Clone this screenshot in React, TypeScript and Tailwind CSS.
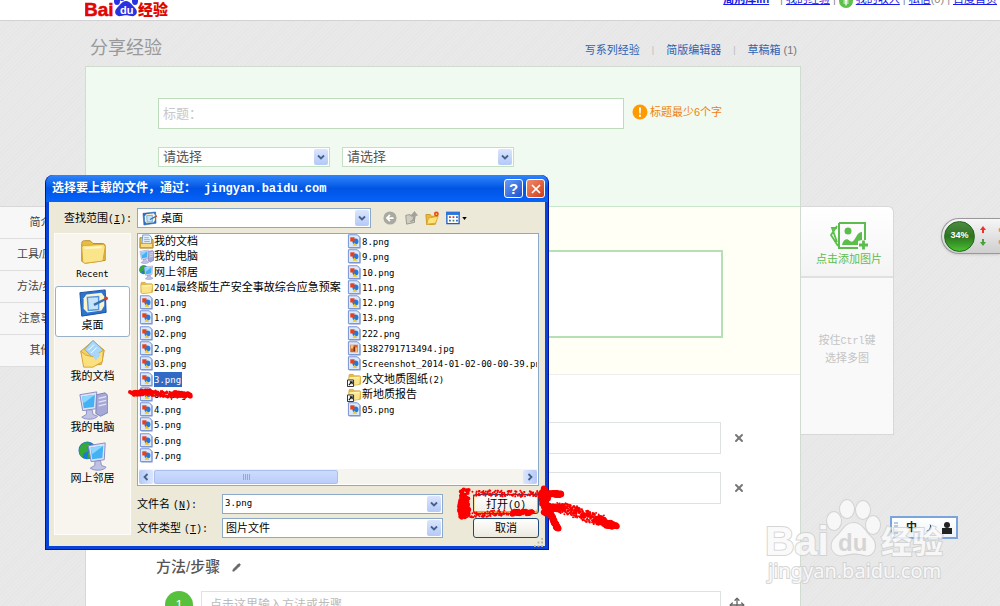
import React, { useState } from 'react';
import clsx from 'clsx';
import { Move, Pencil, X } from 'lucide-react';

type IconKind = 'docs' | 'computer' | 'network' | 'folder' | 'png' | 'jpg' | 'shortcut' | 'desktop';

const FILES: { name: string; kind: IconKind }[] = [
  { name: '我的文档', kind: 'docs' },
  { name: '我的电脑', kind: 'computer' },
  { name: '网上邻居', kind: 'network' },
  { name: '2014最终版生产安全事故综合应急预案', kind: 'folder' },
  { name: '01.png', kind: 'png' },
  { name: '1.png', kind: 'png' },
  { name: '02.png', kind: 'png' },
  { name: '2.png', kind: 'png' },
  { name: '03.png', kind: 'png' },
  { name: '3.png', kind: 'png' },
  { name: '04.png', kind: 'png' },
  { name: '4.png', kind: 'png' },
  { name: '5.png', kind: 'png' },
  { name: '6.png', kind: 'png' },
  { name: '7.png', kind: 'png' },
  { name: '8.png', kind: 'png' },
  { name: '9.png', kind: 'png' },
  { name: '10.png', kind: 'png' },
  { name: '11.png', kind: 'png' },
  { name: '12.png', kind: 'png' },
  { name: '13.png', kind: 'png' },
  { name: '222.png', kind: 'png' },
  { name: '1382791713494.jpg', kind: 'jpg' },
  { name: 'Screenshot_2014-01-02-00-00-39.png', kind: 'png' },
  { name: '水文地质图纸(2)', kind: 'shortcut' },
  { name: '新地质报告', kind: 'shortcut' },
  { name: '05.png', kind: 'png' },
];

const PLACES: { name: string; kind: IconKind }[] = [
  { name: 'Recent', kind: 'folder' },
  { name: '桌面', kind: 'desktop' },
  { name: '我的文档', kind: 'docs' },
  { name: '我的电脑', kind: 'computer' },
  { name: '网上邻居', kind: 'network' },
];

function ShellIcon({ kind, large = false }: { kind: IconKind; large?: boolean }) {
  const size = large ? 'w-[30px] h-[30px] shrink-0' : 'w-[15px] h-[15px] shrink-0';

  if (kind === 'png' || kind === 'jpg') {
    return (
      <svg viewBox="0 0 16 16" className={size}>
        <path d="M2.5 1h9l3 3v11.5h-12z" fill="#8d9cc8" />
        <path d="M1.5 .8h9.5l2.7 2.7v11H1.5z" fill="#dce8fb" stroke="#6f8fd0" />
        {kind === 'png' ? (
          <>
            <circle cx="9" cy="8" r="3.2" fill="#1c7be0" />
            <path d="M3.5 3.500h4.500v4.500h-4.500z" fill="#e8401c" />
            <path d="M6 12.5 8 9l3 3.5z" fill="#f3c51d" />
          </>
        ) : (
          <>
            <path d="M3.5 4h8v8h-8z" fill="#d9642a" />
            <path d="M4 4h3v4H4zM9 7h2v5H9z" fill="#f5c078" />
            <path d="M7 6h1.5v5H7z" fill="#7c2d12" />
          </>
        )}
      </svg>
    );
  }

  if (kind === 'docs' && large) {
    return (
      <svg viewBox="0 0 32 32" className={size}>
        <path d="M3 13 16 2l12 10-3 15-18 2z" fill="#f4cf62" stroke="#d09a28" />
        <path d="m7 11 9-9.5L27 12l-9 10z" fill="#a9d7fa" stroke="#6fa9df" />
        <path d="M11 12l6-6M14 15l6-6" stroke="#fff" />
        <path d="m3 13 5 4 8 2 11-7-1 12-10 6H6z" fill="#fbe07f" stroke="#d6a331" />
        <path d="m16 19 5-5 3 3-5 6z" fill="#a9d7fa" />
      </svg>
    );
  }

  if (kind === 'docs') {
    return (
      <svg viewBox="0 0 16 16" className={size}>
        <path d="M1 4h5l9 2v9H1z" fill="#f1cc60" stroke="#a87e1c" />
        <path d="M4 1h7l2.500 3v8H3z" fill="#e6f1fd" stroke="#6f96c8" />
        <path d="M5.500 4h5M5.500 6h6M5.500 8h6" stroke="#7fb0e6" />
        <path d="M1.500 10h13v4.500h-13z" fill="#f8dc83" stroke="#c7982b" />
      </svg>
    );
  }

  if (kind === 'folder' || kind === 'shortcut') {
    return (
      <svg viewBox="0 0 32 32" className={size}>
        <path d="M4 8c0-2 1-3 3-3h6l3 3h10c2 0 3 1 3 3v15L8 29l-4-2z" fill="#e9bd45" stroke="#b98b20" />
        <path d="M4 12c1-2 2-2 4-2l17-1c3 0 4 1 4 3l-2 12c0 2-1 3-3 3L8 29c-2 0-3-1-3-3z" fill="#fbe58b" stroke="#d3a431" />
        <path d="M7 13l18-1" stroke="#fff6c9" strokeWidth="2" />
        {kind === 'shortcut' && (
          <>
            <path d="M1 17h13v14H1z" fill="#fff" stroke="#222" strokeWidth="2" />
            <path d="M4 28l6-7M6 21h5v5" fill="none" stroke="#111" strokeWidth="2.500" />
          </>
        )}
      </svg>
    );
  }

  if (kind === 'desktop') {
    return (
      <svg viewBox="0 0 32 32" className={size}>
        <path d="m2 5 27-3 1 24-26 4z" fill="#2b74cf" stroke="#174f9f" />
        <path d="M9 7l16-2 3 4v10l-3 5-15 2-4-4V11z" fill="#fdf3cf" />
        <path d="M10 10l12-1v14l-11 1z" fill="#c5e4fb" stroke="#4f96de" strokeWidth="1.500" />
        <path d="m17 18 12-6" stroke="#3b6ea8" strokeWidth="2.500" />
        <circle cx="30" cy="11" r="2" fill="#e23a1d" />
      </svg>
    );
  }

  return (
    <svg viewBox="0 0 32 32" className={size}>
      {kind === 'network' ? (
        <>
          <circle cx="10" cy="10" r="9.500" fill="#1f78d8" />
          <path d="M3 5c3-4 7-4 10-3l-3 5 1 4-5 2-1 5C1 15 0 10 3 5z" fill="#36a93a" />
          <path d="M11 12l5 1-2 5-4 1z" fill="#36a93a" />
        </>
      ) : (
        <path d="m20 5 9-2 3 3v18l-8 4-5-3z" fill="#a6a9d6" stroke="#7a7db4" />
      )}
      {kind === 'computer' && <path d="M22 9l8-2M22 13l8-2M22 17l8-2" stroke="#e2e3f7" strokeWidth="1.500" />}
      <g transform={kind === 'network' ? 'translate(9 1)' : 'translate(0 1)'}>
        <path d="M9 20h6l1 5 5 2c-3 4-13 4-17 1l5-3z" fill="#bfc2e4" stroke="#8b8fc2" />
        <path d="M2 4 20 1l-1 18-14 2z" fill="#dfe2f5" stroke="#8389c2" />
        <path d="M4.500 6 18 4l-1 13-11 1.500z" fill="#45b1f5" />
        <path d="M4.500 6 18 4l-12 9z" fill="#8bd6ff" />
      </g>
    </svg>
  );
}

function Chevron({ className }: { className?: string }) {
  return (
    <span className={clsx('flex items-center justify-center shrink-0 rounded-xs bg-gradient-to-b from-[#dbe5fd] to-[#b4c9f8]', className)}>
      <svg viewBox="0 0 8 8" className="w-2 h-2">
        <path d="m1 2.500 3 3 3-3" fill="none" stroke="#44618c" strokeWidth="1.800" />
      </svg>
    </span>
  );
}

function CategorySelect({ label }: { label: string }) {
  return (
    <div className="flex items-center w-[172px] h-5 bg-white border border-[#c5dfc5] pr-px">
      <select aria-label={label} className="flex-1 min-w-0 appearance-none bg-transparent pl-1 text-[13px] leading-4 text-[#555] outline-none">
        <option>请选择</option>
      </select>
      <Chevron className="w-[14px] h-4" />
    </div>
  );
}

function SiteHeader() {
  return (
    <header className="flex justify-between h-[21px] pl-[85px] bg-white border-b border-[#d2d2d2] overflow-hidden">
      <a href="#home" aria-label="Baidu 经验" className="block h-5 overflow-hidden">
        <svg viewBox="0 0 84 20" className="w-[84px] h-5">
          <text x="-1" y="16" fontFamily="Liberation Sans, sans-serif" fontWeight="700" fontSize="19" fill="#e10601" stroke="#e10601" strokeWidth="0.500">Bai</text>
          <g fill="#2932e1">
            <ellipse cx="32" cy="1" rx="3" ry="4" />
            <ellipse cx="37" cy="-3" rx="3" ry="4" />
            <ellipse cx="50" cy="1" rx="3" ry="4" />
            <path d="M41 1c4 0 6 4 9 7 4 4 1 9-4 8-4-1-6-1-10 0-5 1-8-4-4-8 3-3 5-7 9-7z" />
          </g>
          <text x="35" y="14" fontFamily="Liberation Sans, sans-serif" fontWeight="700" fontSize="11" fill="#fff">du</text>
          <text x="53" y="15" fontFamily="Noto Sans CJK SC, sans-serif" fontWeight="900" fontSize="15" fill="#e10601">经验</text>
        </svg>
      </a>
      <div className="flex items-center gap-[3px] h-4 -mt-[9px] pr-[3px] text-[11px] leading-4 text-[#888] whitespace-nowrap">
        <a href="#user" className="mr-2 font-bold text-[#1a1ae6] underline">周荆库lin</a>
        <span>|</span>
        <a href="#mine" className="text-[#1a1ae6] underline">我的经验</a>
        <span>|</span>
        <svg viewBox="0 0 14 14" className="w-[14px] h-[14px] mt-1">
          <circle cx="7" cy="7" r="7" fill="#5fbf4b" />
          <path d="M4.500 3.500 7 6.500l2.500-3M4.500 7h5M4.500 9h5M7 6.500V11.500" fill="none" stroke="#fff" strokeWidth="1.200" />
        </svg>
        <a href="#income" className="text-[#1a1ae6] underline">我的收入</a>
        <span>|</span>
        <span><a href="#mail" className="text-[#1a1ae6] underline">私信</a>(0)</span>
        <span>|</span>
        <a href="#baidu" className="text-[#1a1ae6] underline">百度首页</a>
      </div>
    </header>
  );
}

function SectionNav() {
  return (
    <nav className="w-[85px] shrink-0 mt-[185px]">
      <ul className="border-t border-[#d8d8d8] bg-[#f7f7f7]">
        {['简介', '工具/原料', '方法/步骤', '注意事项', '其他'].map((item) => (
          <li key={item} className="border-b border-[#dedede]">
            <a href={`#${item}`} className="block h-[31px] pr-1 leading-[31px] text-center text-[11px] text-[#444]">{item}</a>
          </li>
        ))}
      </ul>
    </nav>
  );
}

function ToolRow({ label }: { label: string }) {
  return (
    <div className="flex items-center gap-3">
      <input aria-label={label} className="w-[563px] h-8 bg-white border border-[#dfe3df] outline-none" />
      <button aria-label="删除"><X size={12} className="text-[#777] stroke-[4]" /></button>
    </div>
  );
}

function Editor() {
  return (
    <main className="flex-1 min-w-0 max-w-[716px]">
      <div className="flex items-center justify-between h-[45px] pl-[5px] pr-1 pt-2">
        <h1 className="text-[18px] leading-6 text-[#999]">分享经验</h1>
        <div className="flex items-center gap-3 pt-1 text-[11px] leading-4 text-[#2a62b4]">
          <a href="#series">写系列经验</a>
          <span className="text-[#bbb] text-[9px]">|</span>
          <a href="#simple">简版编辑器</a>
          <span className="text-[#bbb] text-[9px]">|</span>
          <span><a href="#drafts">草稿箱</a> <span className="text-[#777]">(1)</span></span>
        </div>
      </div>

      <div className="border border-[#cfdccf] border-b-0 bg-white">
        <section className="h-[140px] pl-[72px] pt-[31px] bg-[#f0faf0] border-b border-[#c8e6c8]">
          <div className="flex items-center gap-2">
            <input aria-label="标题" placeholder="标题：" className="w-[466px] h-[31px] pl-1 bg-white border border-[#bcdcbc] text-[13px] placeholder:text-[#c8c8c8] outline-none" />
            <p className="flex items-center gap-0.5 text-[11px] leading-4 pb-1 text-[#f07f13]">
              <svg viewBox="0 0 16 16" className="w-4 h-4">
                <circle cx="8" cy="8" r="7.500" fill="#ff9b00" />
                <path d="M7 3.500h2L8.700 9.500H7.300zM7 10.800h2v1.900H7z" fill="#fff" />
              </svg>
              标题最少6个字
            </p>
          </div>
          <div className="flex gap-3 pt-[18px]">
            <CategorySelect label="一级分类" />
            <CategorySelect label="二级分类" />
          </div>
        </section>

        <section className="h-[168px] pl-[72px] pt-[43px] bg-[#fffff5] border-b border-[#eee]">
          <textarea aria-label="简介" className="block w-[565px] h-[88px] resize-none bg-white border-2 border-[#b4e0b4] outline-none" />
        </section>

        <section className="pl-[72px] pt-[47px]">
          <div className="flex flex-col gap-[18px]">
            <ToolRow label="工具一" />
            <ToolRow label="工具二" />
          </div>
          <h2 className="flex items-center gap-3 pt-[51px] -ml-0.5 text-[15px] leading-6 font-medium text-[#555]">
            方法/步骤
            <Pencil size={9} className="fill-[#666] text-[#666]" />
          </h2>
          <div className="flex items-center gap-2 pt-3 pl-[7px]">
            <span className="w-7 h-7 shrink-0 rounded-full bg-[#57c13e] text-center text-[13px] leading-7 text-white">1</span>
            <input aria-label="步骤 1" placeholder="点击这里输入方法或步骤" className="w-[520px] h-[28px] pl-2 bg-white border border-[#dfe3df] text-[12px] placeholder:text-[#bbb] outline-none" />
            <button aria-label="移动"><Move size={16} className="text-[#666]" /></button>
          </div>
        </section>
      </div>
    </main>
  );
}

function PicturePanel() {
  return (
    <aside className="w-[93px] shrink-0 mt-[185px]">
      <div className="rounded-tr-md border border-l-0 border-[#d8d8d8] bg-[#f9f9f9] text-center text-[11px]">
        <button className="flex flex-col items-center w-full h-[71px] pt-[14px] pl-1 border-b-2 border-[#e0e0e0] bg-gradient-to-b from-white to-[#f4f4f4] rounded-tr-md leading-4 text-[#5cbd4d]">
          <svg viewBox="0 0 40 30" className="w-10 h-[30px]">
            <path d="m8 5-6 9 7 11M8 7l-5 0 5 14" fill="none" stroke="#5cbd4d" strokeWidth="1.800" />
            <path d="M10 2h26v17M29 27H10V2" fill="none" stroke="#5cbd4d" strokeWidth="2" />
            <circle cx="19" cy="10" r="3.500" fill="#5cbd4d" />
            <path d="M13 24c1-5 4-8 8-4 3 2 4-1 6-4 2-4 4-5 6-5v8l-4 1v4z" fill="#5cbd4d" />
            <path d="M34.500 19.500v9M30 24h9" stroke="#5cbd4d" strokeWidth="2.800" />
          </svg>
          点击添加图片
        </button>
        <p className="h-[156px] pt-[54px] leading-4 text-[#c4c4c4]">
          按住<span className="font-['Liberation_Mono',monospace] text-[10px]">Ctrl</span>键<br />选择多图
        </p>
      </div>
    </aside>
  );
}

// latin runs use the narrow fixed-width face, the rest the CJK one
function FileName({ name }: { name: string }) {
  return (
    <>
      {name.split(/([\x20-\x7e]+)/).map((part, i) =>
        i % 2 ? (
          <span key={i} className="font-['DejaVu_Sans_Mono',monospace] text-[9px]">{part}</span>
        ) : (
          part
        )
      )}
    </>
  );
}

function FileRow({ name, kind, selected, onSelect }: { name: string; kind: IconKind; selected: boolean; onSelect: () => void }) {
  return (
    <li className="flex items-center min-w-0 overflow-hidden">
      <button onClick={onSelect} className="flex items-center h-[15px] whitespace-nowrap">
        <ShellIcon kind={kind} />
        <span className={clsx('h-[15px] pr-px leading-[15px] text-[11px]', selected && 'bg-[#316ac5] text-white')}>
          <FileName name={name} />
        </span>
      </button>
    </li>
  );
}

function FileDialog() {
  const [selected, setSelected] = useState('3.png');

  return (
    <div
      role="dialog"
      aria-label="选择要上载的文件"
      className="absolute left-[45px] top-[175px] w-[504px] pb-[3px] px-[3px] rounded-t-lg bg-[#0842d6] border border-t-0 border-[#0016a0] text-black"
    >
      <div className="flex items-center gap-[3px] h-[27px] -mx-[3px] pl-[6px] pr-[3px] rounded-t-lg bg-gradient-to-b from-[#2f86fb] via-[#0054e3] to-[#0563fb]">
        <h2 className="flex-1 text-[12px] font-bold text-white whitespace-nowrap">
          选择要上载的文件，通过：
          <span className="font-['Liberation_Mono',monospace] ml-2">jingyan.baidu.com</span>
        </h2>
        <button className="w-[19px] h-[19px] rounded-[3px] border border-white bg-gradient-to-br from-[#6c9bf5] to-[#1a4fd0] text-[15px] leading-4 font-bold text-white">?</button>
        <button aria-label="关闭" className="flex items-center justify-center w-[19px] h-[19px] rounded-[3px] border border-white bg-gradient-to-br from-[#f08b6a] to-[#cf3a10]">
          <X size={14} className="text-white stroke-[3]" />
        </button>
      </div>

      <div className="bg-[#ece9d8] px-[5px] pt-[6px] h-[344px]">
        <div className="flex items-center h-5 text-[11px]">
          <label htmlFor="look-in" className="w-[83px] pl-[10px]">查找范围<span className="font-['Liberation_Mono',monospace] text-[10px]">(<u>I</u>):</span></label>
          <div className="flex items-center w-[234px] h-5 px-px pl-1 border border-[#8ba9c9] bg-white">
            <ShellIcon kind="desktop" />
            <select id="look-in" className="flex-1 min-w-0 appearance-none pl-1 leading-4 outline-none">
              <option>桌面</option>
            </select>
            <Chevron className="w-[14px] h-4" />
          </div>
          <div className="flex items-center gap-[7px] pl-3">
            <button aria-label="后退">
              <svg viewBox="0 0 16 16" className="w-[14px] h-[14px]">
                <circle cx="8" cy="8" r="7.500" fill="#aaa9a0" />
                <path d="M12 8H5M8 4.500 4.500 8 8 11.500" fill="none" stroke="#fff" strokeWidth="2" />
              </svg>
            </button>
            <button aria-label="向上一级">
              <svg viewBox="0 0 16 16" className="w-[14px] h-[14px]">
                <path d="M2 5l5-1 1 2 4-1v8l-9 2z" fill="#cfcdc2" stroke="#96948a" />
                <path d="M7 12c3-1 4-3 3.500-7H8l4-4.500L15.500 5H13c0 5-2 7-6 7z" fill="#a5a399" stroke="#8f8d84" strokeWidth="0.500" />
              </svg>
            </button>
            <button aria-label="新建文件夹">
              <svg viewBox="0 0 16 16" className="w-[14px] h-[14px]">
                <path d="M1 4h5l1 2h6l-1 9-10 1z" fill="#e9b93c" stroke="#c89724" />
                <path d="m4 8 11-2-3 8-10 1z" fill="#fde27a" stroke="#d8a62f" />
                <circle cx="13" cy="3.500" r="2.800" fill="#e8491d" />
                <circle cx="13" cy="3.500" r="1" fill="#ffd34d" />
              </svg>
            </button>
            <button aria-label="查看" className="flex items-center gap-0.5">
              <svg viewBox="0 0 16 16" className="w-[14px] h-[14px]">
                <path d="M1 1.500h14v13H1z" fill="#fff" stroke="#1d5fc4" strokeWidth="1.500" />
                <path d="M0 1h16v3.500H0z" fill="#2b73dd" />
                <path d="M3.500 7h2M7.500 7h2" stroke="#c43b1e" strokeWidth="2" />
                <path d="M11.500 7h2M3.500 11h2M11.500 11h2" stroke="#2f64c4" strokeWidth="2" />
                <path d="M7.500 11h2" stroke="#2f9a3a" strokeWidth="2" />
              </svg>
              <svg viewBox="0 0 6 4" className="w-[5px] h-[3px]"><path d="M0 0h6L3 4z" /></svg>
            </button>
          </div>
        </div>

        <div className="flex gap-[6px] pt-[5px]">
          <ul className="w-[77px] h-[302px] shrink-0 border border-[#fdfcf8] bg-[#f7f5ee] pt-px text-center">
            {PLACES.map((place) => (
              <li key={place.name}>
                <button
                  className={clsx(
                    'flex flex-col items-center justify-end w-full h-[51px] pb-1 rounded-[3px] border text-[11px] leading-[14px]',
                    place.kind === 'desktop' ? 'border-[#98b1c9] bg-white' : 'border-transparent'
                  )}
                >
                  <ShellIcon kind={place.kind} large />
                  <span><FileName name={place.name} /></span>
                </button>
              </li>
            ))}
          </ul>

          <div className="flex-1 min-w-0 pr-px">
            <div className="h-[253px] border border-[#8ba9c9] bg-white px-px">
              <ul className="grid grid-flow-col grid-rows-15 grid-cols-[208px_minmax(0,1fr)] h-[229px]">
                {FILES.map((file) => (
                  <FileRow key={file.name} {...file} selected={selected === file.name} onSelect={() => setSelected(file.name)} />
                ))}
              </ul>
              <div className="flex items-center justify-between h-[15px] mt-[6px] bg-[#f5f4ef]">
                <div className="flex items-center gap-px">
                  <Chevron className="w-[14px] h-[14px] rotate-90" />
                  <span className="flex items-center justify-center gap-px w-[184px] h-[14px] rounded-xs border border-[#a9bff2] bg-gradient-to-b from-[#cddcfd] to-[#bacdfb]">
                    <span className="w-px h-1.5 bg-[#8ea8e6]" />
                    <span className="w-px h-1.5 bg-[#8ea8e6]" />
                    <span className="w-px h-1.5 bg-[#8ea8e6]" />
                    <span className="w-px h-1.5 bg-[#8ea8e6]" />
                  </span>
                </div>
                <Chevron className="w-[14px] h-[14px] -rotate-90" />
              </div>
            </div>

            <div className="grid grid-cols-[85px_221px_minmax(0,1fr)] gap-y-1 pt-2 text-[11px]">
              <label htmlFor="file-name" className="self-center">文件名 <span className="font-['Liberation_Mono',monospace] text-[10px]">(<u>N</u>):</span></label>
              <div className="flex items-center h-5 pr-px border border-[#8ba9c9] bg-white">
                <input id="file-name" value={selected} readOnly className="flex-1 min-w-0 pl-0.5 font-['DejaVu_Sans_Mono',monospace] text-[9px] outline-none" />
                <Chevron className="w-[14px] h-4" />
              </div>
              <button className="ml-[30px] h-5 rounded-[3px] border border-[#1c4a7e] bg-gradient-to-b from-white to-[#f0efe8] shadow-[inset_-1px_-2px_0_0_#f0a53a,inset_1px_1px_0_0_#fbdc9c]">
                打开<span className="font-['Liberation_Mono',monospace] text-[10px]">(<u>O</u>)</span>
              </button>
              <label htmlFor="file-type" className="self-center">文件类型 <span className="font-['Liberation_Mono',monospace] text-[10px]">(<u>T</u>):</span></label>
              <div className="flex items-center h-5 pr-px border border-[#8ba9c9] bg-white">
                <select id="file-type" className="flex-1 min-w-0 appearance-none pl-[3px] leading-4 outline-none">
                  <option>图片文件</option>
                </select>
                <Chevron className="w-[14px] h-4" />
              </div>
              <button className="ml-[30px] h-5 rounded-[3px] border border-[#1c4a7e] bg-gradient-to-b from-white to-[#ebe9df]">取消</button>
            </div>
            <svg viewBox="0 0 10 10" className="w-[9px] h-[9px] ml-auto -mr-1">
              <path d="M8 1h2M8 5h2M4 5h2M8 9h2M4 9h2M0 9h2" stroke="#b8b4a2" strokeWidth="2" />
            </svg>
          </div>
        </div>
      </div>
    </div>
  );
}

// crayon strokes: x1, y1, x2, y2, spread, dot radius, number of dots
const STROKES = [
  [132, 393, 152, 392, 2, 2, 60],
  [150, 393, 176, 395, 3, 1, 110],
  [172, 394, 190, 395, 2, 2, 60],
  [465, 492, 461, 516, 4, 2, 70],
  [465, 502, 467, 514, 3, 2, 40],
  [474, 493, 540, 494, 3, 1, 130],
  [468, 516, 508, 512, 3, 1, 70],
  [512, 513, 533, 512, 2, 2, 60],
  [544, 494, 562, 494, 1, 3, 40],
  [543, 491, 547, 512, 3, 3, 60],
  [546, 508, 562, 508, 3, 2, 60],
  [560, 507, 602, 521, 5, 1, 330],
  [598, 520, 616, 527, 2, 3, 50],
  [548, 510, 558, 529, 1, 3, 50],
];

function noise(n: number) {
  const v = Math.sin(n * 127.1) * 43758.5453;
  return (v - Math.floor(v)) * 2 - 1;
}

function Scribbles() {
  return (
    <svg viewBox="0 0 640 606" className="absolute left-0 top-0 w-[640px] h-[606px] pointer-events-none" fill="#fb0000">
      {STROKES.map(([x1, y1, x2, y2, spread, r, count], s) =>
        Array.from({ length: count }, (_, i) => {
          const t = i / count;
          const dx = noise(i + s * 400) * spread;
          const dy = noise(i + s * 400 + 7000) * spread;
          return <circle key={`${s}-${i}`} cx={x1 + (x2 - x1) * t + dx} cy={y1 + (y2 - y1) * t + dy} r={r} />;
        })
      )}
    </svg>
  );
}

function SpeedBall() {
  return (
    <div className="absolute right-0 top-[218px] flex items-center gap-1 w-[59px] h-9 pl-0.5 rounded-l-full border border-r-0 border-[#999] bg-gradient-to-b from-[#f6f6f6] to-[#cfcfcf] shadow">
      <span className="flex items-center justify-center w-[31px] h-[31px] rounded-full border border-[#24651c] bg-gradient-to-b from-[#4c8b3f] via-[#2c7420] to-[#49c12e] text-[9px] font-bold text-white">34%</span>
      <svg viewBox="0 0 8 20" className="w-2 h-5">
        <path d="M3 7V4H1l3-4 3 4H5v3z" fill="#f03030" />
        <path d="M3 13v3H1l3 4 3-4H5v-3z" fill="#4aa13a" />
      </svg>
      <svg viewBox="0 0 4 20" className="w-1 h-5 ml-auto">
        <circle cx="5" cy="4" r="2.500" fill="#d8a440" />
        <circle cx="5" cy="16" r="2.500" fill="#d8a440" />
      </svg>
    </div>
  );
}

function ImeBar() {
  return (
    <div className="absolute left-[890px] top-[516px] flex items-center gap-2 w-[68px] h-[23px] px-0.5 border-2 border-[#7aa5dc] bg-gradient-to-b from-white to-[#eef3f8] text-[11px] font-bold text-[#222]">
      <span className="w-1 h-3 border-x-2 border-dotted border-[#b8cade]" />
      中
      <svg viewBox="0 0 10 12" className="w-2 h-3"><path d="M6 1c5 5 1 10-5 9 4-1 6-4 5-9z" fill="#333" /></svg>
      <svg viewBox="0 0 12 14" className="w-3 h-[14px]">
        <circle cx="6" cy="4" r="3" fill="#222" />
        <path d="M1 7h10v6H1z" fill="#222" />
      </svg>
    </div>
  );
}

function Watermark() {
  return (
    <svg
      viewBox="0 0 190 96"
      className="absolute left-[762px] top-[494px] w-[190px] h-24 pointer-events-none"
      fill="#fafafa"
      stroke="#d0d0d0"
      strokeWidth="2"
      paintOrder="stroke"
      opacity="0.85"
    >
      <text x="3" y="61" fontFamily="Liberation Sans, sans-serif" fontWeight="700" fontSize="41">Bai</text>
      <ellipse cx="72" cy="27" rx="7" ry="9" />
      <ellipse cx="85" cy="15" rx="7" ry="9" />
      <ellipse cx="101" cy="16" rx="7" ry="9" />
      <ellipse cx="111" cy="31" rx="7" ry="9" />
      <path d="M92 29c8 0 11 9 17 14 8 8 3 21-7 18-7-2-12-2-19 0-12 3-18-10-9-18 7-6 9-14 18-14z" />
      <text x="76" y="57" fontFamily="Liberation Sans, sans-serif" fontWeight="700" fontSize="24" fill="#d2d2d2" stroke="none">du</text>
      <text x="119" y="59" fontFamily="Noto Sans CJK SC, sans-serif" fontWeight="700" fontSize="31">经验</text>
      <text x="6" y="84" fontFamily="Noto Sans, sans-serif" fontSize="20">jingyan.baidu.com</text>
    </svg>
  );
}

export default function App() {
  return (
    <div className="relative h-screen overflow-hidden bg-[repeating-linear-gradient(135deg,#e6e6e6_0,#e6e6e6_1px,#e9e9e9_1px,#e9e9e9_3px)] font-['Liberation_Sans','Noto_Sans_CJK_SC',sans-serif]">
      <SiteHeader />
      <div className="flex items-start">
        <SectionNav />
        <Editor />
        <PicturePanel />
      </div>
      <FileDialog />
      <SpeedBall />
      <ImeBar />
      <Watermark />
      <Scribbles />
    </div>
  );
}
